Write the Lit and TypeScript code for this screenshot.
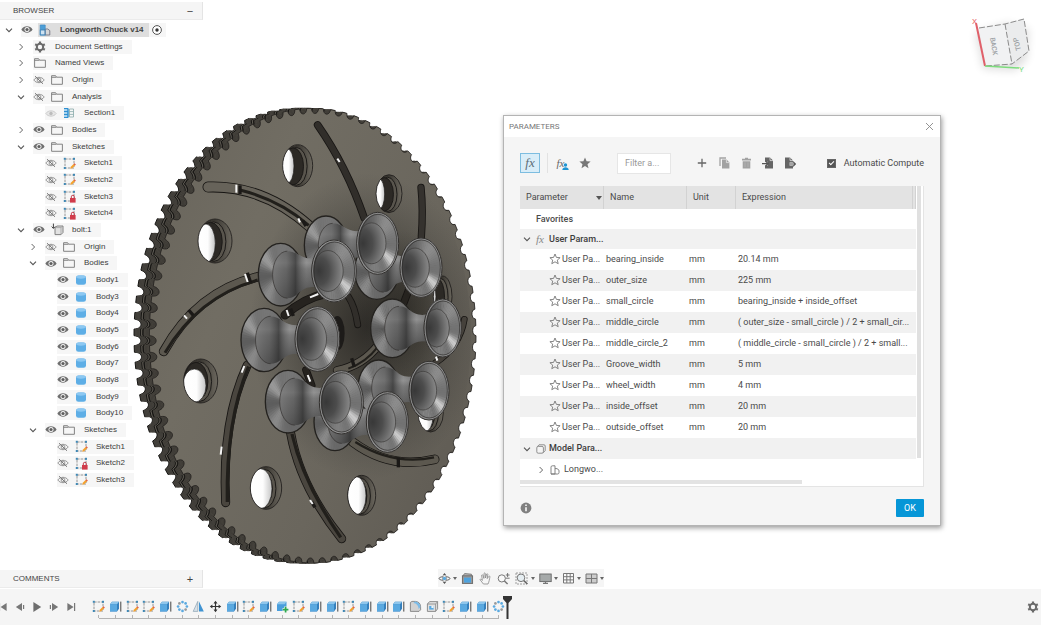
import { LitElement, html, svg, css, nothing } from "lit";
import { customElement, property, state } from "lit/decorators.js";
import { classMap } from "lit/directives/class-map.js";

/* ---------- icons ---------- */

const icon = (w: number, h: number, box: string, body: unknown) =>
  html`<svg width=${w} height=${h} viewBox=${box} aria-hidden="true">${body}</svg>`;

const sketchBase = svg`
  <rect x="2" y="2" width="9" height="9" fill="none" stroke="#8a8a8a" stroke-width=".9" stroke-dasharray="2.6 1"/>
  <g fill="#3f88b5"><rect x=".8" y=".8" width="2" height="2"/><rect x="10" y=".8" width="2" height="2"/><rect x=".8" y="10" width="2" height="2"/></g>`;

const icons: Record<string, () => unknown> = {
  chevronDown: () => icon(8, 8, "0 0 8 8", svg`<path d="M1 2.600 4 5.600 7 2.600" fill="none" stroke="#555" stroke-width="1.100"/>`),
  chevronRight: () => icon(8, 8, "0 0 8 8", svg`<path d="M2.600 1 5.600 4 2.600 7" fill="none" stroke="#666" stroke-width="1"/>`),
  eye: () => icon(12, 9, "0 0 12 9", svg`<path d="M.4 4.5C3 .3 9 .3 11.6 4.5 9 8.7 3 8.7.4 4.5Z" fill="#6e6e6e"/><circle cx="6" cy="4.5" r="2.5" fill="#f4f4f4"/><circle cx="6" cy="4.5" r="1.6" fill="#5e5e5e"/>`),
  eyeFaint: () => icon(12, 9, "0 0 12 9", svg`<path d="M.8 4.5C3.2 1 8.8 1 11.2 4.5 8.8 8 3.2 8 .8 4.5Z" fill="#e6e6e6" stroke="#cdcdcd"/><circle cx="6" cy="4.5" r="1.7" fill="#bcbcbc"/>`),
  eyeOff: () => icon(12, 10, "0 0 12 10", svg`<path d="M.8 5C3.2 1.4 8.8 1.4 11.2 5 8.8 8.6 3.2 8.6.8 5Z" fill="none" stroke="#8c8c8c" stroke-width=".9"/><circle cx="6" cy="5" r="1.9" fill="none" stroke="#8c8c8c" stroke-width=".9"/><path d="M2 1.2 10 8.8" stroke="#777" stroke-width="1"/>`),
  folder: () => icon(12, 10, "0 0 12 10", svg`<path d="M.6 9.3V.7H4.6L5.6 2.2H11.4V9.3ZM.6 2.3H5.4" fill="none" stroke="#777" stroke-width=".9"/>`),
  gear: () => icon(12, 12, "0 0 12 12", svg`<circle cx="6" cy="6" r="3.200" fill="none" stroke="#6a6a6a" stroke-width="2"/><g stroke="#6a6a6a" stroke-width="2.200"><path d="M6 .5V2.200M6 9.800v1.700M1.200 3.200l1.500.9M9.300 7.900l1.500.9M1.200 8.800l1.500-.9M9.300 4.100l1.500-.9"/></g>`),
  document: () => icon(12, 12, "0 0 12 12", svg`<rect x="1.2" y="1" width="5" height="5" fill="#4d9ed6"/><rect x="1.2" y="6" width="5" height="5" fill="#cfe3f2" stroke="#3d7eb0" stroke-width=".8"/><path d="M6.2 5h2.6l2 1.6V11H6.2Z" fill="#d8d8d8" stroke="#667" stroke-width=".8"/><path d="M1.2 1h5v10h-5Z" fill="none" stroke="#3d8ac4" stroke-width=".7"/>`),
  section: () => icon(12, 12, "0 0 12 12", svg`<path d="M1 1.5h4v9H1M5 1.5v9M1 4.5h4M1 7.5h4" stroke="#2e8fd0" fill="#a9d3ee" stroke-width="1"/><path d="M6.5 2h4v8h-4ZM6.5 4.6h4M6.5 7.4h4" stroke="#8aa" fill="none" stroke-width=".8"/>`),
  sketch: () => icon(13, 13, "0 0 13 13", svg`${sketchBase}<path d="M7.2 11.8 7.8 9.8 10.6 7 12 8.4 9.2 11.2Z" fill="#f5a12c"/><path d="m10.6 7 .8-.8 1.4 1.4-.8.8Z" fill="#e0503a"/>`),
  sketchLock: () => icon(13, 13, "0 0 13 13", svg`${sketchBase}<rect x="7" y="8" width="5.6" height="4.6" fill="#d13b4a"/><path d="M8.3 8V6.8a1.5 1.5 0 0 1 3 0V8" fill="none" stroke="#c33646" stroke-width="1"/>`),
  component: () => icon(13, 13, "0 0 13 13", svg`<path d="M4 4.6 6 3h6v6.5L10 11.6H4Z" fill="#e2e2e2" stroke="#777" stroke-width=".9"/><path d="M4 4.6h6v7M10 4.6 12 3" fill="none" stroke="#999" stroke-width=".7"/><path d="M2.4.6v4.6M.6 3.6l1.8 1.8 1.8-1.8" fill="none" stroke="#444" stroke-width="1"/>`),
  body: () => icon(12, 12, "0 0 12 12", svg`<rect x="1" y="1.4" width="10" height="9.4" rx="2.4" fill="#5eaee6"/><ellipse cx="6" cy="3" rx="4.6" ry="1.7" fill="#8cc8f2"/>`),
  target: () => icon(12, 12, "0 0 12 12", svg`<circle cx="6" cy="6" r="4.4" fill="#fff" stroke="#555" stroke-width="1"/><circle cx="6" cy="6" r="1.7" fill="#333"/>`),
  extrude: () => icon(13, 13, "0 0 13 13", svg`<path d="M1 4.2 3 1.8h7v7L8 11.4H1Z" fill="#3580bd"/><path d="M1 4.2 3 1.8h7L8 4.2Z" fill="#8ec6ec"/><path d="M1 4.2h7v7.2H1Z" fill="#5aa9e0"/><path d="M11.8 1.6v10" stroke="#444" stroke-width="1"/>`),
  pattern: () => icon(13, 13, "0 0 13 13", svg`${[0, 1, 2, 3, 4, 5, 6, 7].map((i) => svg`<circle cx=${6.5 + 4.4 * Math.cos((i * Math.PI) / 4)} cy=${6.5 + 4.4 * Math.sin((i * Math.PI) / 4)} r="1.35" fill=${i % 4 === 1 ? "#9a9a9a" : "#5aa9e0"}/>`)}`),
  mirror: () => icon(13, 13, "0 0 13 13", svg`<path d="M5.8 1.4V11.4H1.2Z" fill="#d8e2ea" stroke="#8aa0b0" stroke-width=".7"/><path d="M7 1.4V11.4h4.8Z" fill="#3f93d2"/>`),
  move: () => icon(13, 13, "0 0 13 13", svg`<path d="M6.5 2v9M2 6.5h9" stroke="#333" stroke-width="1.2"/><path d="M6.5.8 8.5 3.4h-4ZM6.5 12.2l2-2.6h-4ZM.8 6.5l2.6-2v4ZM12.2 6.5l-2.6-2v4Z" fill="#333"/>`),
  combine: () => icon(13, 13, "0 0 13 13", svg`<path d="M1 4.200 3 1.800h7.500V8.600L8.600 11H1Z" fill="#4a9edc"/><path d="M1 4.200 3 1.800h7.500L8.600 4.200Z" fill="#8ec6ec"/><path d="M9.600 6.600v6M6.600 9.600h6" stroke="#f5f5f5" stroke-width="3"/><path d="M9.600 6.800v5.600M6.800 9.600h5.600" stroke="#2fa84f" stroke-width="1.700"/>`),
  fillet: () => icon(13, 13, "0 0 13 13", svg`<path d="M1.4 11.4V2.4L3 1.4h3.4a5.6 5.6 0 0 1 5.2 5.4v3L10 11.4Z" fill="#d2d2d2" stroke="#777" stroke-width=".8"/><path d="M6 1.6a5.4 5.4 0 0 1 5.4 5.6L9.6 9A5.6 5.6 0 0 0 4.4 3Z" fill="#7cbce8"/>`),
  shell: () => icon(13, 13, "0 0 13 13", svg`<path d="M1.4 4 3.6 1.6h8V8.8L9.6 11.4H1.4Z" fill="#e0e0e0" stroke="#777" stroke-width=".8"/><path d="M1.4 4h8.2v7.4M9.6 4l2-2.4" fill="none" stroke="#888" stroke-width=".8"/><path d="M3.2 6h4.4v3.6H3.2Z" fill="#5aa9e0"/><path d="M5.4 6h2.2v2H5.4Z" fill="#e8f3fa"/>`),
  stepStart: () => icon(10, 10, "0 0 10 10", svg`<path d="M8.600 1V9L2.600 5Z" fill="#777"/><path d="M1.5 1.2v7.6" stroke="#777" stroke-width="1.2"/>`),
  stepBack: () => icon(10, 10, "0 0 10 10", svg`<path d="M7 1V9L.8 5Z" fill="#777"/><path d="M8.600 3v4" stroke="#777" stroke-width="1.200"/>`),
  play: () => icon(10, 12, "0 0 10 12", svg`<path d="M1.4 1 9.2 6 1.4 11Z" fill="#6e6e6e"/>`),
  stepForward: () => icon(10, 10, "0 0 10 10", svg`<path d="M3 1V9L9.200 5Z" fill="#777"/><path d="M1.400 3v4" stroke="#777" stroke-width="1.200"/>`),
  stepEnd: () => icon(10, 10, "0 0 10 10", svg`<path d="M1.400 1V9L7.600 5Z" fill="#777"/><path d="M8.600 1v8" stroke="#777" stroke-width="1.200"/>`),
  orbit: () => icon(13, 13, "0 0 13 13", svg`<path d="M6.500 1 8.300 3.200H4.700ZM6.500 12l1.800-2.200H4.700Z" fill="#555"/><path d="M5.200 3.600C4.600 5.400 4.600 7.600 5.200 9.400M7.800 3.600c.6 1.800.6 4 0 5.800" fill="none" stroke="#777" stroke-width=".9"/><path d="M4.600 4.700C2.400 5 1 5.700 1 6.500s1.400 1.500 3.600 1.800M8.400 4.700c2.200.3 3.600 1 3.600 1.800S10.600 8 8.400 8.300" fill="none" stroke="#666" stroke-width="1"/><circle cx="6.500" cy="6.500" r="1.700" fill="#5aa9e0"/>`),
  camera: () => icon(13, 13, "0 0 13 13", svg`<path d="M2 3.8 3.6 1.6l6.8.6v1.6" fill="#bbb" stroke="#666" stroke-width=".8"/><rect x="1.400" y="3.800" width="10.200" height="7.600" fill="#999" stroke="#666" stroke-width=".9"/><rect x="3" y="5.600" width="7" height="5" fill="#4fa3de"/>`),
  hand: () => icon(13, 13, "0 0 13 13", svg`<path d="M4.4 12 1 7.6c.4-.8 1.2-.6 2.4.8L2.6 3.2c.6-.8 1.2-.4 1.4.2l.9 3L5 1.4c.5-.7 1.2-.5 1.3.2l.2 4.4 1.2-4c.7-.5 1.2-.1 1.1.6l-.6 4L10 4.2c.7-.3 1.1.2.9.9C10.4 7.4 10.2 9.6 9 12Z" fill="#f6f6f6" stroke="#888" stroke-width=".8"/>`),
  zoom: () => icon(13, 13, "0 0 13 13", svg`<circle cx="4.8" cy="6.4" r="3.6" fill="#f8f8f8" stroke="#777" stroke-width="1"/><path d="M7.4 9 10.6 12" stroke="#777" stroke-width="1.5"/><path d="M10.6 1v4M8.8 3h3.8M8.8 6.2h3.8" stroke="#666" stroke-width=".9"/>`),
  fit: () => icon(14, 13, "0 0 14 13", svg`<rect x="1" y="1" width="11" height="11" fill="none" stroke="#888" stroke-width=".8" stroke-dasharray="2 1"/><circle cx="6" cy="5.8" r="3.8" fill="#e6eef2" stroke="#777"/><path d="M8.8 8.6 12.4 12" stroke="#666" stroke-width="1.5"/>`),
  monitor: () => icon(13, 13, "0 0 13 13", svg`<rect x=".8" y="2" width="11.4" height="7.6" fill="#a5a9a9" stroke="#666" stroke-width=".9"/><path d="M4 11.4h5M6.5 9.6v2" stroke="#777" stroke-width="1.2"/>`),
  grid: () => icon(13, 13, "0 0 13 13", svg`<path d="M1.500 1.500h10v9.500h-10ZM4.800 1.500V11M8.200 1.500V11M1.500 4.700h10M1.500 7.900h10" fill="#fafafa" stroke="#777" stroke-width="1"/>`),
  panes: () => icon(13, 13, "0 0 13 13", svg`<path d="M1 2h11v9H1ZM6.500 2v9M1 6.500h11" fill="#ccc" stroke="#777" stroke-width="1"/>`),
  star: () => icon(12, 12, "0 0 12 12", svg`<path d="M6 .6 7.600 4.300 11.600 4.600 8.500 7.200 9.500 11.200 6 9 2.500 11.200 3.500 7.200.4 4.600 4.400 4.300Z" fill="#777"/>`),
  starOutline: () => icon(12, 12, "0 0 12 12", svg`<path d="M6 1 7.400 4.400 11.100 4.700 8.300 7.100 9.200 10.700 6 8.800 2.800 10.700 3.700 7.100.9 4.700 4.600 4.400Z" fill="none" stroke="#777" stroke-width=".9"/>`),
  person: () => icon(7, 7, "0 0 7 7", svg`<circle cx="3.500" cy="2" r="1.700" fill="#1f94d2"/><path d="M.3 7c0-3.600 6.400-3.600 6.400 0Z" fill="#1f94d2"/>`),
  plus: () => icon(10, 10, "0 0 10 10", svg`<path d="M5 .8v8.400M.8 5h8.400" stroke="#666" stroke-width="1.300"/>`),
  copy: () => icon(11, 12, "0 0 11 12", svg`<path d="M1 9V1h6" fill="none" stroke="#a2a2a2" stroke-width="1.300"/><path d="M3 2.600h4.600l2.800 2.800v6H3Z" fill="#a2a2a2"/><path d="M7.400 2.600v3h3" fill="none" stroke="#eee" stroke-width=".7"/>`),
  trash: () => icon(11, 12, "0 0 11 12", svg`<path d="M1 1.800h9v1.600H1ZM4 .8h3v1H4ZM1.700 4.200h7.600v7.200H1.700Z" fill="#a2a2a2"/><path d="M4 5.400v4.600M7 5.400v4.600" stroke="#b8b8b8" stroke-width=".7"/>`),
  importFile: () => icon(12, 12, "0 0 12 12", svg`<path d="M3 .6h5l3 3v7.800H3Z" fill="#666"/><path d="M8 .6v3h3" fill="none" stroke="#eee" stroke-width=".7"/><path d="M3 6.600h3" stroke="#f5f5f5" stroke-width="3.600"/><path d="M0 6.600h5.500M3.600 4.200 6.200 6.600 3.600 9" fill="none" stroke="#555" stroke-width="1.200"/>`),
  exportFile: () => icon(12, 12, "0 0 12 12", svg`<path d="M1 .6h5l3 3v7.800H1Z" fill="#666"/><path d="M6 .6v3h3" fill="none" stroke="#eee" stroke-width=".7"/><path d="M5.500 7H9.500" stroke="#f5f5f5" stroke-width="3"/><path d="M5.500 7h5.200M9 4.600 11.500 7 9 9.400" fill="none" stroke="#555" stroke-width="1.200"/>`),
  close: () => icon(9, 9, "0 0 9 9", svg`<path d="M1 1l7 7M8 1 1 8" stroke="#888" stroke-width=".9"/>`),
  info: () => icon(12, 12, "0 0 12 12", svg`<circle cx="6" cy="6" r="5.400" fill="#808080"/><path d="M6 5.200v4M6 2.600v1.400" stroke="#fff" stroke-width="1.500"/>`),
  cube: () => icon(10, 10, "0 0 10 10", svg`<rect x=".8" y="2.400" width="6.600" height="6.800" rx="1.400" fill="#f4f4f4" stroke="#777" stroke-width=".8"/><path d="M1.600 2.400 3 .8h5q1.200 0 1.200 1.200v4.600L7.400 8.600" fill="none" stroke="#777" stroke-width=".8"/>`),
  docOutline: () => icon(10, 10, "0 0 10 10", svg`<path d="M1 9V2.200Q1 .8 2.400.8H5V9ZM5 3.600h2L9 5.200V7.600Q9 9 7.600 9H1" fill="none" stroke="#777" stroke-width=".9"/>`),
};

/* ---------- rendered model ---------- */

const CX = 548, CY = 707, RX = 490, RY = 682, TEETH = 86;

function gearPath(dx: number): string {
  const at = (a: number, depth: number) =>
    `${(CX + dx + (RX - depth) * Math.cos(a)).toFixed(1)} ${(CY + (RY - depth) * Math.sin(a)).toFixed(1)}`;
  const step = (Math.PI * 2) / TEETH;
  let d = `M${at(0, 0)}`;
  for (let i = 0; i < TEETH; i++) {
    const a = i * step;
    const depth = 13 + 7 * (1 - Math.cos(a));
    d += `L${at(a + step * 0.4, 0)}C${at(a + step * 0.42, depth)} ${at(a + step * 0.96, depth)} ${at(a + step, 0)}`;
  }
  return d + "Z";
}

const holes = [
  [503, 197, 45, 63, 472, 198, 20, 52],
  [777, 281, 39, 57, 747, 282, 17, 46],
  [255, 423, 51, 66, 228, 430, 28, 58],
  [212, 843, 51, 66, 193, 857, 35, 50],
  [408, 1164, 47, 64, 392, 1166, 34, 60],
  [695, 1186, 42, 60, 680, 1187, 28, 57],
  [938, 590, 28, 62, 900, 590, 18, 40],
  [902, 938, 38, 58, 885, 950, 24, 45],
];

const slots: [string, number, string][] = [
  ["M563 75Q650 200 703 355", 18, "#312e2a"],
  ["M234 261Q400 255 540 380", 28, "#67635a"],
  ["M873 262Q880 330 874 410", 17, "#35322e"],
  ["M101 754Q200 575 385 530", 24, "#5c584f"],
  ["M287 1208Q275 960 352 795", 22, "#4a463f"],
  ["M635 1316Q510 1160 482 1000", 22, "#4a463f"],
  ["M914 1078Q780 1110 668 1026", 24, "#5c584f"],
  ["M683 674Q675 620 655 590", 16, "#312e2a"],
  ["M1003 658Q990 740 915 790", 15, "#45413b"],
  ["M622 812Q700 795 745 735", 22, "#5c584f"],
  ["M465 645Q520 595 590 580", 22, "#26231f"],
  ["M545 856L528 810", 18, "#26231f"],
  ["M815 625L838 565", 18, "#26231f"],
];

/* darker inner wall running along one side of each slot */
const slotWalls: [string, number][] = [
  ["M330 270Q450 300 536 376", 9],
  ["M105 758Q205 590 383 540", 9],
  ["M292 1206Q288 960 356 800", 10],
  ["M632 1312Q520 1150 486 1002", 10],
  ["M912 1072Q790 1098 676 1026", 7],
  ["M655 806Q710 785 742 742", 6],
];

const glints = [
  "M319 254v24", "M505 355l5 12", "M622 176l7 10", "M345 522l8 24", "M162 646l9 10",
  "M343 798l-8 20", "M275 1040l-3 24", "M540 1200l8 12", "M533 825l8 20", "M470 630l6 18", "M540 592l25-10", "M918 770l4 12",
];

const marks = ["M330 256v26", "M352 518l10 30", "M176 630l14 16", "M805 1072v30", "M665 775l8 26", "M518 362l10 16", "M545 1206l10 16", "M482 626l8 22"];

/* rollers as back flange then front flange, farthest first */
const rollers = [
  [740, 512, 66, 86, 873, 503, 63, 89],
  [588, 436, 65, 88, 743, 430, 63, 93],
  [452, 524, 67, 94, 612, 513, 67, 93],
  [402, 720, 69, 95, 562, 717, 67, 97],
  [787, 685, 65, 88, 938, 684, 56, 87],
  [746, 864, 62, 84, 897, 872, 60, 88],
  [615, 965, 63, 87, 772, 966, 63, 91],
  [474, 905, 68, 94, 634, 907, 66, 95],
];

const bump = (deg: number, at: number, width: number) => {
  const d = ((deg - at + 540) % 360) - 180;
  return Math.exp(-(d * d) / (2 * width * width));
};

function cone(cx: number, cy: number, rx: number, ry: number, shade: (deg: number) => number) {
  const out = [];
  for (let deg = 0; deg < 360; deg += 6) {
    const g = Math.round(shade(deg));
    const a = ((deg - 0.8) * Math.PI) / 180, b = ((deg + 6.8) * Math.PI) / 180;
    out.push(svg`<path d=${`M${cx - 8} ${cy}L${(cx + rx * Math.cos(a)).toFixed(1)} ${(cy + ry * Math.sin(a)).toFixed(1)}L${(cx + rx * Math.cos(b)).toFixed(1)} ${(cy + ry * Math.sin(b)).toFixed(1)}Z`} fill=${`rgb(${g},${g},${g})`}/>`);
  }
  return out;
}

const backShade = (d: number) => 104 + 50 * bump(d, 215, 14) + 34 * bump(d, 128, 16) + 14 * bump(d, 275, 26) - 12 * bump(d, 175, 20);
const frontShade = (d: number) => 112 + 92 * bump(d, 38, 11) + 30 * bump(d, 300, 26) + 18 * bump(d, 100, 18) - 34 * bump(d, 195, 45);

function roller([bx, by, brx, bry, fx, fy, frx, fry]: number[]) {
  const my = (by + fy) / 2, mid = (bx + fx) / 2 + 14, half = bry * 0.45;
  const rx = brx * 0.66, ry = bry * 0.75, ringX = bx + 20;
  const end = fx - 20;
  const neck = `M${ringX} ${by - ry}C${ringX + 30} ${by - ry} ${mid - 34} ${my - half} ${mid} ${my - half}C${mid + 22} ${my - half} ${end - 16} ${fy - fry * 0.55} ${end} ${fy - fry * 0.75}L${end} ${fy + fry * 0.75}C${end - 16} ${fy + fry * 0.55} ${mid + 22} ${my + half} ${mid} ${my + half}C${mid - 34} ${my + half} ${ringX + 30} ${by + ry} ${ringX} ${by + ry}A${rx} ${ry} 0 0 1 ${ringX} ${by - ry}Z`;
  return svg`
    ${cone(bx, by, brx, bry, backShade)}
    <ellipse cx=${bx} cy=${by} rx=${brx} ry=${bry} fill="none" stroke="#24221f" stroke-width="4"/>
    <path d=${neck} fill="url(#neck)"/>
    <path d=${neck} fill="url(#waist)"/>
    <path d=${`M${ringX} ${by - ry}A${rx} ${ry} 0 0 0 ${ringX} ${by + ry}`} fill="none" stroke="#33312f" stroke-width="2"/>
    ${cone(fx, fy, frx, fry, frontShade)}
    <ellipse cx=${fx - 18} cy=${fy} rx=${frx * 0.68} ry=${fry * 0.66} fill="url(#bore)" stroke="#3a3836" stroke-width="2"/>
    <ellipse cx=${fx} cy=${fy} rx=${frx - 2} ry=${fry - 2} fill="none" stroke="#8f8f8f" stroke-width="5"/>
    <ellipse cx=${fx} cy=${fy} rx=${frx} ry=${fry} fill="none" stroke="#201e1c" stroke-width="2.5"/>
    <ellipse cx=${fx + 1} cy=${fy} rx=${frx - 6} ry=${fry - 6} fill="none" stroke="#2c2a28" stroke-width="2"/>`;
}

@customElement("model-view")
class ModelView extends LitElement {
  static styles = css`
    :host { display: block; }
    svg { display: block; overflow: visible; }
  `;

  render() {
    return html`<svg width="350" height="470" viewBox="0 0 1050 1410" role="img" aria-label="Longworth chuck model">
      <defs>
        <linearGradient id="face" x1="0" y1="0" x2="1" y2=".6">
          <stop offset="0" stop-color="#68645b"/><stop offset=".35" stop-color="#716d63"/><stop offset=".75" stop-color="#6a665d"/><stop offset="1" stop-color="#625e56"/>
        </linearGradient>
        <radialGradient id="shadow"><stop offset="0" stop-color="#1f1d1a" stop-opacity=".8"/><stop offset=".5" stop-color="#26241f" stop-opacity=".45"/><stop offset="1" stop-color="#333" stop-opacity="0"/></radialGradient>
        <linearGradient id="hole"><stop offset="0" stop-color="#2d2a26"/><stop offset=".5" stop-color="#3b3832"/><stop offset="1" stop-color="#6b675e"/></linearGradient>
        <linearGradient id="through"><stop offset="0" stop-color="#fff"/><stop offset=".6" stop-color="#fdfdfd"/><stop offset="1" stop-color="#c4c4c4"/></linearGradient>
        <linearGradient id="neck" x1="0" y1="0" x2="0" y2="1"><stop offset="0" stop-color="#7a7a7a"/><stop offset=".3" stop-color="#9a9a9a"/><stop offset=".42" stop-color="#7e7e7e"/><stop offset=".7" stop-color="#666"/><stop offset="1" stop-color="#484848"/></linearGradient>
        <linearGradient id="waist"><stop offset="0" stop-color="#777" stop-opacity=".7"/><stop offset=".25" stop-color="#555" stop-opacity=".6"/><stop offset=".42" stop-color="#303030" stop-opacity=".75"/><stop offset=".62" stop-color="#666" stop-opacity=".15"/><stop offset="1" stop-color="#222" stop-opacity=".6"/></linearGradient>
        <radialGradient id="bore" cx=".2" cy=".5" r=".85"><stop offset="0" stop-color="#383838"/><stop offset=".4" stop-color="#4c4c4c"/><stop offset="1" stop-color="#909090"/></radialGradient>
        <clipPath id="disc"><ellipse cx=${CX} cy=${CY} rx=${RX * 0.97} ry=${RY * 0.97}/></clipPath>
        ${holes.map(([x, y, rx, ry], i) => svg`<clipPath id=${"hole" + i}><ellipse cx=${x} cy=${y} rx=${rx} ry=${ry}/></clipPath>`)}
      </defs>
      ${[-46, -42, -38, -34, -30, -26].map((dx) => svg`<path d=${gearPath(dx)} fill="#3d3b36" stroke=${dx === -46 || dx === -26 ? "#151412" : "#45423d"} stroke-width="3"/>`)}
      <path d=${gearPath(-23)} fill="#2b2926" stroke="#77736a" stroke-width="2"/>
      ${[-19, -15, -11, -7, -3].map((dx) => svg`<path d=${gearPath(dx)} fill="#3a3732" stroke=${dx === -19 ? "#151412" : "#46433d"} stroke-width="3"/>`)}
      <path d=${gearPath(0)} fill="url(#face)" stroke="#23211e" stroke-width="2.500"/>
      <g clip-path="url(#disc)">
        <ellipse cx="710" cy="680" rx="350" ry="460" fill="url(#shadow)"/>
        <ellipse cx="820" cy="620" rx="150" ry="230" fill="url(#shadow)" opacity=".6"/>
      </g>
      ${holes.map(([x, y, rx, ry, wx, wy, wrx, wry], i) => svg`
        <g clip-path=${`url(#hole${i})`}>
          <ellipse cx=${x} cy=${y} rx=${rx} ry=${ry} fill="url(#hole)"/>
          <ellipse cx=${x - 4} cy=${y + 2} rx=${rx * 0.72} ry=${ry * 0.9} fill="#59554d" stroke="#1d1b19" stroke-width="3"/>
          <ellipse cx=${x - 14} cy=${y + 2} rx=${rx * 0.7} ry=${ry * 0.88} fill="#2c2925" stroke="#1d1b19" stroke-width="3"/>
          <ellipse cx=${wx} cy=${wy} rx=${wrx} ry=${wry} fill="url(#through)" stroke="#1d1b19" stroke-width="2"/>
        </g>
        <ellipse cx=${x} cy=${y} rx=${rx} ry=${ry} fill="none" stroke="#1d1b19" stroke-width="2.5"/>`)}
      <g fill="none" stroke-linecap="round">
        ${slots.map(([d, w, c]) => svg`<path d=${d} stroke="#171513" stroke-width=${w + 5}/><path d=${d} stroke=${c} stroke-width=${w}/>`)}
        ${slotWalls.map(([d, w]) => svg`<path d=${d} stroke="#211f1b" stroke-width=${w} stroke-linecap="butt"/>`)}
        ${marks.map((d) => svg`<path d=${d} stroke="#1b1917" stroke-width="10" stroke-linecap="butt"/>`)}
        ${glints.map((d) => svg`<path d=${d} stroke="#f4f4f4" stroke-width="6" stroke-linecap="butt"/>`)}
      </g>
      <ellipse cx="622" cy="700" rx="22" ry="52" fill="#1d1b19"/>
      ${rollers.map(roller)}
    </svg>`;
  }
}

@customElement("view-cube")
class ViewCube extends LitElement {
  static styles = css`
    :host { display: block; }
    svg { display: block; overflow: visible; }
    text { font-family: Roboto, "Liberation Sans", sans-serif; }
    .face { font-size: 7px; font-weight: 500; fill: #9a9ea2; }
    .axis { font-size: 8px; }
  `;

  render() {
    return html`<svg width="66" height="64" viewBox="0 0 66 64" role="img" aria-label="View cube">
      <defs><filter id="soft" x="-30%" y="-30%" width="160%" height="160%"><feGaussianBlur stdDeviation="4"/></filter></defs>
      <path d="M8 18 40 8 62 14 60 44 48 56 16 54Z" fill="#000" opacity=".12" filter="url(#soft)"/>
      <path d="M12 13 38 9 45 49 18 51Z" fill="#f1f2f3"/>
      <path d="M38 9 57 4 62 36 45 49Z" fill="#ebeced"/>
      <path d="M12 13 38 9 57 4 62 36 45 49 18 51M38 9 45 49" fill="none" stroke="#8b8b8b" stroke-width="1" stroke-dasharray="6 2"/>
      <path d="M9 8 18 51" stroke="#e0606a" stroke-width="2"/>
      <path d="M18 51 52 53" stroke="#7ddc7d" stroke-width="1.400"/>
      <text class="axis" x="5" y="9" fill="#e86a6a">X</text>
      <text class="axis" x="52" y="57" fill="#82e082">Y</text>
      <text class="face" transform="translate(23 23) rotate(80)">BACK</text>
      <text class="face" transform="translate(54 35) rotate(-104)">TOP</text>
    </svg>`;
  }
}

/* ---------- browser tree ---------- */

interface Node { label: string; level: number; icon: string; eye?: string; open?: boolean; root?: boolean }

const sk = (label: string, level: number, locked = false): Node => ({ label, level, icon: locked ? "sketchLock" : "sketch", eye: "eyeOff" });

const nodes: Node[] = [
  { label: "Longworth Chuck v14", level: 0, icon: "document", eye: "eye", open: true, root: true },
  { label: "Document Settings", level: 1, icon: "gear", open: false },
  { label: "Named Views", level: 1, icon: "folder", open: false },
  { label: "Origin", level: 1, icon: "folder", eye: "eyeOff", open: false },
  { label: "Analysis", level: 1, icon: "folder", eye: "eyeOff", open: true },
  { label: "Section1", level: 2, icon: "section", eye: "eyeFaint" },
  { label: "Bodies", level: 1, icon: "folder", eye: "eye", open: false },
  { label: "Sketches", level: 1, icon: "folder", eye: "eye", open: true },
  sk("Sketch1", 2), sk("Sketch2", 2), sk("Sketch3", 2, true), sk("Sketch4", 2, true),
  { label: "bolt:1", level: 1, icon: "component", eye: "eye", open: true },
  { label: "Origin", level: 2, icon: "folder", eye: "eyeOff", open: false },
  { label: "Bodies", level: 2, icon: "folder", eye: "eye", open: true },
  ...[1, 3, 4, 5, 6, 7, 8, 9, 10].map((n): Node => ({ label: `Body${n}`, level: 3, icon: "body", eye: "eye" })),
  { label: "Sketches", level: 2, icon: "folder", eye: "eye", open: true },
  sk("Sketch1", 3), sk("Sketch2", 3, true), sk("Sketch3", 3),
];

const buttonReset = css`
  button { font: inherit; color: inherit; border: 0; padding: 0; margin: 0; background: none; display: flex; align-items: center; justify-content: center; }
  svg { display: block; flex: none; }
`;

@customElement("panel-header")
class PanelHeader extends LitElement {
  @property() label = "";
  @property() sign = "−";
  static styles = [buttonReset, css`
    :host { display: flex; align-items: center; justify-content: space-between; height: 17px; padding: 0 5px 0 13px;
      background: #f5f5f5; border-right: 1px solid #e4e4e4; border-bottom: 1px solid #ebebeb; font: 8px/16px "Liberation Sans", Arial, sans-serif; color: #444; }
    h2 { font: inherit; margin: 0; }
    button { width: 14px; height: 14px; font-size: 11px; }
  `];
  render() {
    return html`<h2>${this.label}</h2><button aria-label="Toggle ${this.label.toLowerCase()}">${this.sign}</button>`;
  }
}

@customElement("browser-tree")
class BrowserTree extends LitElement {
  static styles = [buttonReset, css`
    :host { display: block; font: 8px/14px "Liberation Sans", Arial, sans-serif; color: #3c3c3c; }
    ul { list-style: none; margin: 0; padding: 0; }
    li { display: flex; align-items: center; height: 17px; padding-left: calc(3px + var(--level) * 12px); }
    li:nth-child(3n) { height: 16px; }
    .toggle { width: 12px; height: 14px; margin-right: 6px; flex: none; }
    .row { display: flex; align-items: center; height: 14px; padding-right: 9px; background: #f6f6f6; white-space: nowrap; }
    .eye { width: 12px; height: 14px; margin-right: 5px; }
    .kind { width: 14px; display: flex; justify-content: center; margin-right: 8px; }
    .root { padding-right: 3px; }
    .name { display: flex; align-items: center; }
    .root .name { background: #dedede; font-weight: bold; padding-right: 5px; margin-right: 2px; color: #444; }
  `];
  render() {
    return html`<ul>${nodes.map((n) => html`
      <li style=${`--level:${n.level}`}>
        ${n.open === undefined ? html`<span class="toggle"></span>` : html`<button class="toggle" aria-label="Expand ${n.label}">${n.open ? icons.chevronDown() : icons.chevronRight()}</button>`}
        <div class=${classMap({ row: true, root: !!n.root })}>
          ${n.eye ? html`<button class="eye" aria-label="Visibility of ${n.label}">${icons[n.eye]()}</button>` : nothing}
          <span class="name"><span class="kind">${icons[n.icon]()}</span>${n.label}</span>
          ${n.root ? icons.target() : nothing}
        </div>
      </li>`)}</ul>`;
  }
}

/* ---------- parameters dialog ---------- */

const params = [
  ["bearing_inside", "mm", "20.14 mm"],
  ["outer_size", "mm", "225 mm"],
  ["small_circle", "mm", "bearing_inside + inside_offset"],
  ["middle_circle", "mm", "( outer_size - small_circle ) / 2 + small_cir..."],
  ["middle_circle_2", "mm", "( middle_circle - small_circle ) / 2 + small..."],
  ["Groove_width", "mm", "5 mm"],
  ["wheel_width", "mm", "4 mm"],
  ["inside_offset", "mm", "20 mm"],
  ["outside_offset", "mm", "20 mm"],
];

@customElement("parameters-dialog")
class ParametersDialog extends LitElement {
  @state() private auto = true;

  static styles = [buttonReset, css`
    :host { display: block; box-sizing: border-box; width: 438px; border: 1px solid #b4b4b4; background: #f5f5f5;
      box-shadow: 1px 2px 5px rgba(0, 0, 0, .4); font: 9px/13px Roboto, "Liberation Sans", sans-serif; color: #4a4a4a; }
    .title { display: flex; align-items: center; justify-content: space-between; height: 21px; padding: 0 4px 0 5px; background: #fff; }
    h2 { margin: 0; font-size: 8px; font-weight: 400; color: #777; }
    .title button { width: 14px; height: 14px; }
    .content { padding: 16px 16px 0 16px; }
    .tools { display: flex; align-items: center; height: 20px; }
    .fx { font: italic 13px/16px "Liberation Serif", serif; color: #5c6c76; }
    .tools .active { width: 20px; height: 20px; box-sizing: border-box; background: #d9edf8; border: 1px solid #7dbde0; }
    .rule { width: 1px; height: 20px; background: #e2e2e2; margin: 0 4px 0 7px; }
    .tool { width: 22px; height: 20px; }
    .users .fx { font-size: 11px; color: #666; }
    .users svg { margin: 6px 0 0 -2px; }
    .filter { box-sizing: border-box; width: 54px; height: 21px; margin: 0 20px 0 21px; padding: 0 7px; border: 1px solid #e6e6e6; background: #fff; font: inherit; color: #444; border-radius: 0; }
    .filter::placeholder { color: #999; opacity: 1; }
    .auto { display: flex; align-items: center; gap: 8px; margin-left: auto; }
    .auto input { appearance: none; width: 9px; height: 9px; margin: 0; background: #fff; border: 1px solid #666; display: grid; place-items: center; }
    .auto input:checked { background: #555; }
    .auto input:checked::before { content: ""; width: 4px; height: 2px; margin-bottom: 2px; border: solid #fff; border-width: 0 0 1px 1px; transform: rotate(-45deg); }
    .frame { margin-top: 13px; display: grid; grid-template-columns: 1fr 7px; background: #fff; border-right: 1px solid #e4e4e4; border-bottom: 1px solid #e4e4e4; }
    table { width: 100%; table-layout: fixed; border-collapse: collapse; }
    th, td { box-sizing: border-box; height: 21px; padding: 0 0 0 2px; text-align: left; font-weight: 400; white-space: nowrap; overflow: hidden; }
    thead th { height: 23px; padding: 0 6px; background: #e3e3e3; box-shadow: inset -1px 0 #d2d2d2; }
    .param { width: 84px; } .name { width: 83px; } .unit { width: 49px; } .more { width: 3px; }
    thead .more { padding: 0; }
    .line { display: flex; align-items: center; }
    .sort { justify-content: space-between; margin-right: -4px; }
    .caret { border: 3px solid transparent; border-top: 4px solid #555; border-bottom: 0; }
    .favorites th { height: 20px; padding-left: 16px; font-weight: 500; }
    .group { background: #f1f1f1; }
    .group th { font-weight: 500; color: #3c3c3c; }
    .group th, .child td { padding-left: 3px; }
    .first th { height: 20px; }
    .group .glyph { width: 10px; margin: 0 3px 0 5px; display: flex; }
    .group .fx { font-size: 11px; color: #888; }
    .item td:first-child { padding-left: 29px; }
    .item svg { margin-right: 1px; }
    .item .line { align-items: flex-start; }
    .item:nth-child(even) { background: #f1f1f1; }
    .child td:first-child { padding-left: 17px; }
    .child .glyph { margin: 0 4px 0 5px; display: flex; }
    .vbar { width: 4px; height: 272px; margin-left: 1px; background: #e0e0e0; }
    .hbar { grid-column: 1 / -1; width: 70%; height: 4px; margin: 0 0 2px; background: #e3e3e3; }
    .foot { display: flex; align-items: center; justify-content: space-between; padding: 12px 0 8px; }
    .foot .ok { width: 28px; height: 18px; background: #0696d7; color: #fff; border-radius: 1px; font-weight: 400; }
  `];

  render() {
    return html`
      <div class="title"><h2>PARAMETERS</h2><button aria-label="Close">${icons.close()}</button></div>
      <div class="content">
        <div class="tools">
          <button class="active" aria-label="All parameters"><span class="fx">fx</span></button>
          <span class="rule"></span>
          <button class="tool users" aria-label="User parameters"><span class="fx">fx</span>${icons.person()}</button>
          <button class="tool" aria-label="Favorites">${icons.star()}</button>
          <input class="filter" type="text" placeholder="Filter a..." aria-label="Filter all parameters">
          <button class="tool" aria-label="Add">${icons.plus()}</button>
          <button class="tool" aria-label="Copy">${icons.copy()}</button>
          <button class="tool" aria-label="Delete">${icons.trash()}</button>
          <button class="tool" aria-label="Import">${icons.importFile()}</button>
          <button class="tool" aria-label="Export">${icons.exportFile()}</button>
          <label class="auto"><input type="checkbox" .checked=${this.auto} @change=${(e: Event) => (this.auto = (e.target as HTMLInputElement).checked)}>Automatic Compute</label>
        </div>
        <div class="frame">
          <table>
            <thead><tr>
              <th class="param"><span class="line sort">Parameter<span class="caret"></span></span></th>
              <th class="name">Name</th><th class="unit">Unit</th><th>Expression</th><th class="more"></th>
            </tr></thead>
            <tbody>
              <tr class="favorites"><th colspan="5">Favorites</th></tr>
              <tr class="group first"><th colspan="5"><span class="line">${icons.chevronDown()}<span class="glyph fx">fx</span>User Param...</span></th></tr>
            </tbody>
            <tbody>
              ${params.map(([name, unit, expr]) => html`<tr class="item">
                <td><span class="line">${icons.starOutline()}User Pa...</span></td><td>${name}</td><td>${unit}</td><td>${expr}</td><td></td>
              </tr>`)}
            </tbody>
            <tbody>
              <tr class="group"><th colspan="5"><span class="line">${icons.chevronDown()}<span class="glyph">${icons.cube()}</span>Model Para...</span></th></tr>
              <tr class="child"><td colspan="5"><span class="line">${icons.chevronRight()}<span class="glyph">${icons.docOutline()}</span>Longwo...</span></td></tr>
            </tbody>
          </table>
          <div class="vbar"></div>
          <div class="hbar"></div>
        </div>
        <div class="foot">${icons.info()}<button class="ok">OK</button></div>
      </div>`;
  }
}

/* ---------- bottom bars ---------- */

const navItems: [string, string, boolean][] = [
  ["orbit", "Orbit", true], ["camera", "Look at", false], ["hand", "Pan", false], ["zoom", "Zoom", false],
  ["fit", "Fit", true], ["monitor", "Display settings", true], ["grid", "Grid and snaps", true], ["panes", "Viewports", true],
];

@customElement("nav-bar")
class NavBar extends LitElement {
  static styles = [buttonReset, css`
    :host { display: flex; align-items: center; gap: 4px; height: 18px; background: #f5f5f5; }
    button { height: 18px; gap: 2px; }
    button.single { width: 14px; }
    .caret { border: 2px solid transparent; border-top: 3px solid #666; border-bottom: 0; }
  `];
  render() {
    return navItems.map(([name, label, menu]) => html`<button class=${menu ? "menu" : "single"} aria-label=${label}>${icons[name]()}${menu ? html`<span class="caret"></span>` : nothing}</button>`);
  }
}

const features = "sketch extrude sketch sketch extrude pattern mirror move extrude sketch extrude combine sketch extrude extrude sketch extrude extrude extrude fillet shell sketch extrude extrude pattern".split(" ");

@customElement("time-line")
class TimeLine extends LitElement {
  static styles = [buttonReset, css`
    :host { display: flex; align-items: center; height: 36px; background: #f5f5f5; overflow: hidden; }
    .play { display: flex; margin-left: -6px; }
    .play button { width: 17px; height: 20px; }
    ol { display: flex; list-style: none; margin: 0 0 0 11px; padding: 0; }
    li { box-sizing: border-box; width: 17px; height: 23px; padding-top: 4px; display: flex; flex-direction: column; align-items: center; }
    li:nth-child(3n) { width: 16px; }
    .tick { width: 1px; height: 3px; margin-top: auto; background: #b4b4b4; }
    .track { width: 100%; height: 1px; background: #b4b4b4; }
    li:first-child .track { width: 50%; align-self: flex-end; }
    li:last-child .track { width: 50%; align-self: flex-start; }
    .marker { margin-left: -4px; }
    .settings { margin-left: auto; margin-right: 2px; }
  `];
  render() {
    return html`
      <div class="play">${["stepStart", "stepBack", "play", "stepForward", "stepEnd"].map((n) => html`<button aria-label=${n}>${icons[n]()}</button>`)}</div>
      <ol>${features.map((f) => html`<li><button aria-label=${f}>${icons[f]()}</button><span class="tick"></span><span class="track"></span></li>`)}</ol>
      <svg class="marker" width="9" height="23" viewBox="0 0 9 23" aria-hidden="true"><path d="M0 0h9v3L5.500 7V23h-2V7L0 3Z" fill="#333"/></svg>
      <button class="settings" aria-label="Timeline settings">${icons.gear()}</button>`;
  }
}

@customElement("app-root")
class AppRoot extends LitElement {
  static styles = css`
    :host { display: flex; flex-direction: column; height: 100vh; background: #fff; overflow: hidden; }
    .stage { position: relative; flex: 1; min-height: 0; display: flex; }
    model-view { position: absolute; left: 130px; top: 100px; }
    view-cube { position: absolute; right: 8px; top: 15px; }
    parameters-dialog { position: absolute; right: 100px; top: 115px; }
    nav-bar { position: absolute; left: 50%; bottom: 2px; transform: translateX(-50%); }
    aside { position: relative; width: 203px; padding: 2px 0 1px; box-sizing: border-box; display: flex; flex-direction: column; }
    browser-tree { margin-top: 1px; flex: 1; min-height: 0; }
  `;
  render() {
    return html`
      <main class="stage">
        <model-view></model-view>
        <aside>
          <panel-header label="BROWSER" sign="−"></panel-header>
          <browser-tree></browser-tree>
          <panel-header label="COMMENTS" sign="+"></panel-header>
        </aside>
        <view-cube></view-cube>
        <parameters-dialog></parameters-dialog>
        <nav-bar></nav-bar>
      </main>
      <time-line></time-line>`;
  }
}
